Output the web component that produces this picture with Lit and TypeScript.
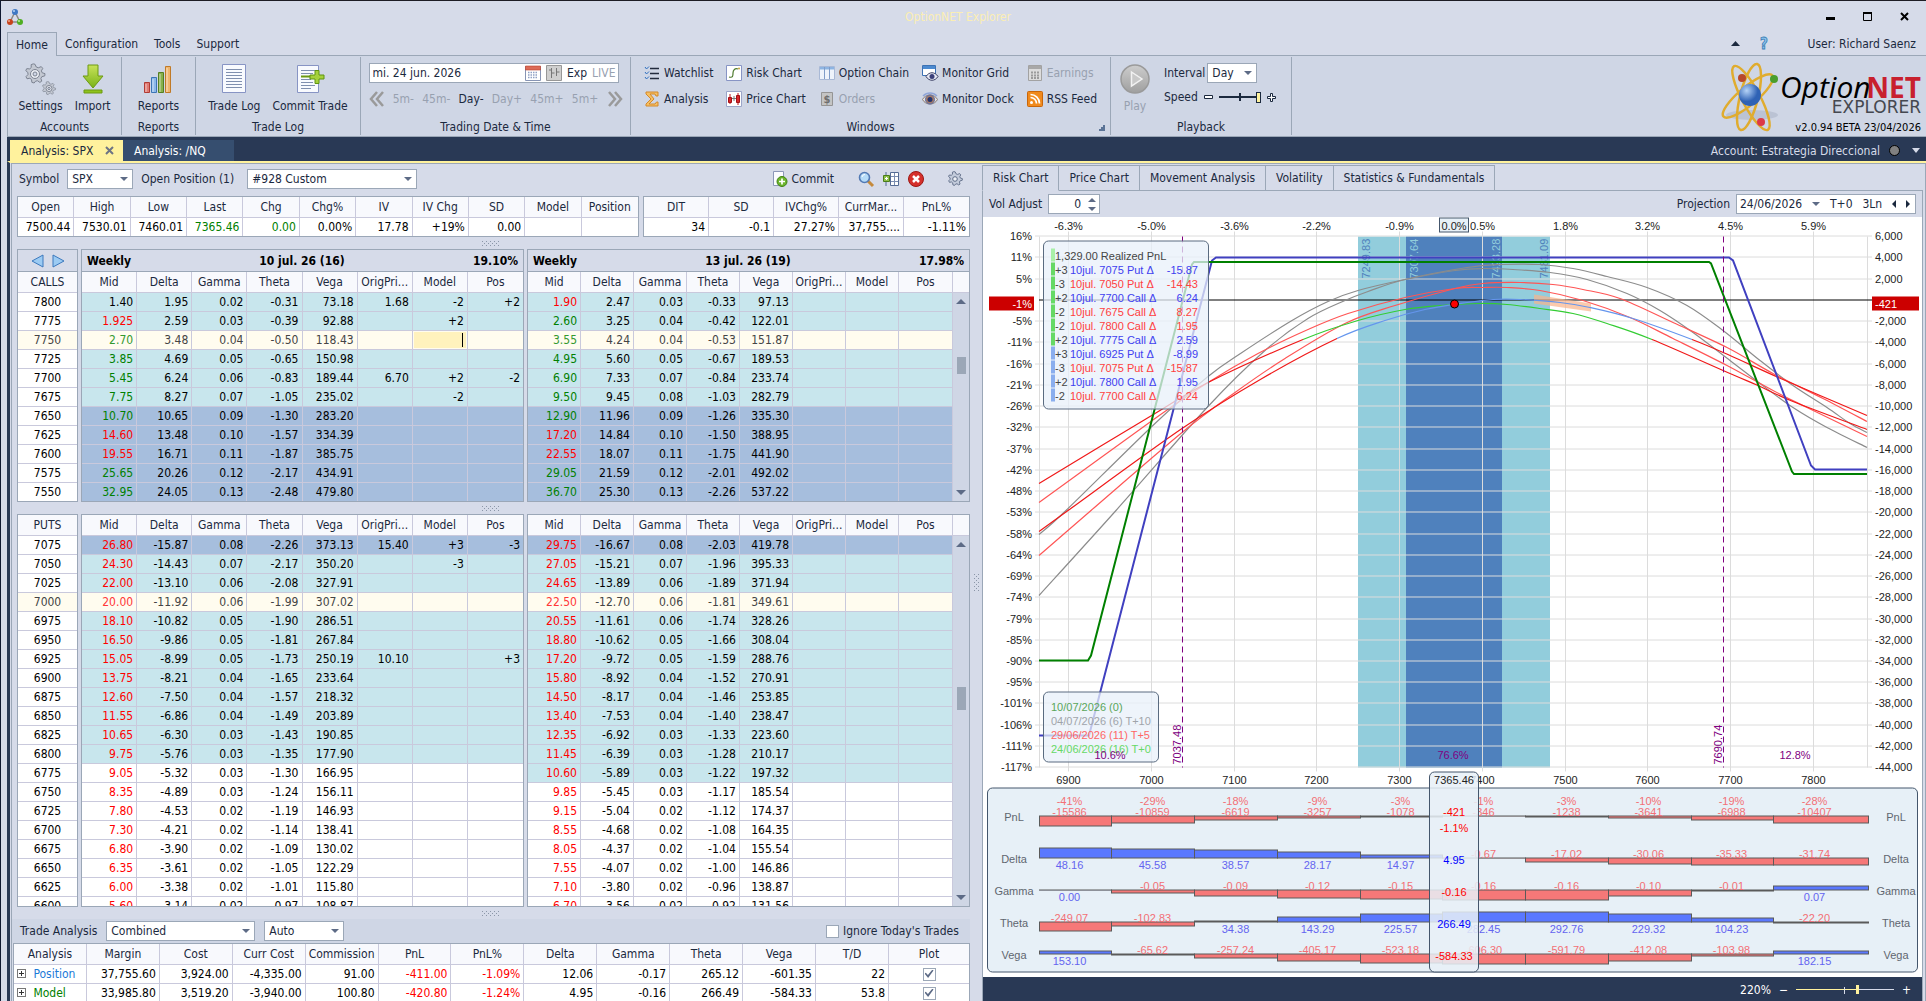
import {LitElement, html, svg, css, nothing} from 'lit';
import {customElement, property} from 'lit/decorators.js';
import {classMap} from 'lit/directives/class-map.js';

type Row = string[];

// Mid, Delta, Gamma, Theta, Vega, OrigPrice, Model, Pos. The leading letter of Mid is the tick colour.
const CALL_STRIKES = [7800, 7775, 7750, 7725, 7700, 7675, 7650, 7625, 7600, 7575, 7550];

const CALLS_A: Row[] = [
    ['k1.40', '1.95', '0.02', '-0.31', '73.18', '1.68', '-2', '+2'],
    ['r1.925', '2.59', '0.03', '-0.39', '92.88', '', '+2', ''],
    ['g2.70', '3.48', '0.04', '-0.50', '118.43', '', '', ''],
    ['g3.85', '4.69', '0.05', '-0.65', '150.98', '', '', ''],
    ['g5.45', '6.24', '0.06', '-0.83', '189.44', '6.70', '+2', '-2'],
    ['g7.75', '8.27', '0.07', '-1.05', '235.02', '', '-2', ''],
    ['g10.70', '10.65', '0.09', '-1.30', '283.20', '', '', ''],
    ['r14.60', '13.48', '0.10', '-1.57', '334.39', '', '', ''],
    ['r19.55', '16.71', '0.11', '-1.87', '385.75', '', '', ''],
    ['g25.65', '20.26', '0.12', '-2.17', '434.91', '', '', ''],
    ['g32.95', '24.05', '0.13', '-2.48', '479.80', '', '', ''],
];

const CALLS_B: Row[] = [
    ['r1.90', '2.47', '0.03', '-0.33', '97.13', '', '', ''],
    ['g2.60', '3.25', '0.04', '-0.42', '122.01', '', '', ''],
    ['g3.55', '4.24', '0.04', '-0.53', '151.87', '', '', ''],
    ['g4.95', '5.60', '0.05', '-0.67', '189.53', '', '', ''],
    ['g6.90', '7.33', '0.07', '-0.84', '233.74', '', '', ''],
    ['g9.50', '9.45', '0.08', '-1.03', '282.79', '', '', ''],
    ['g12.90', '11.96', '0.09', '-1.26', '335.30', '', '', ''],
    ['r17.20', '14.84', '0.10', '-1.50', '388.95', '', '', ''],
    ['r22.55', '18.07', '0.11', '-1.75', '441.90', '', '', ''],
    ['g29.05', '21.59', '0.12', '-2.01', '492.02', '', '', ''],
    ['g36.70', '25.30', '0.13', '-2.26', '537.22', '', '', ''],
];

const PUT_STRIKES = [7075, 7050, 7025, 7000, 6975, 6950, 6925, 6900, 6875, 6850,
    6825, 6800, 6775, 6750, 6725, 6700, 6675, 6650, 6625, 6600];

const PUTS_A: Row[] = [
    ['r26.80', '-15.87', '0.08', '-2.26', '373.13', '15.40', '+3', '-3'],
    ['r24.30', '-14.43', '0.07', '-2.17', '350.20', '', '-3', ''],
    ['r22.00', '-13.10', '0.06', '-2.08', '327.91', '', '', ''],
    ['r20.00', '-11.92', '0.06', '-1.99', '307.02', '', '', ''],
    ['r18.10', '-10.82', '0.05', '-1.90', '286.51', '', '', ''],
    ['r16.50', '-9.86', '0.05', '-1.81', '267.84', '', '', ''],
    ['r15.05', '-8.99', '0.05', '-1.73', '250.19', '10.10', '', '+3'],
    ['r13.75', '-8.21', '0.04', '-1.65', '233.64', '', '', ''],
    ['r12.60', '-7.50', '0.04', '-1.57', '218.32', '', '', ''],
    ['r11.55', '-6.86', '0.04', '-1.49', '203.89', '', '', ''],
    ['r10.65', '-6.30', '0.03', '-1.43', '190.85', '', '', ''],
    ['r9.75', '-5.76', '0.03', '-1.35', '177.90', '', '', ''],
    ['r9.05', '-5.32', '0.03', '-1.30', '166.95', '', '', ''],
    ['r8.35', '-4.89', '0.03', '-1.24', '156.11', '', '', ''],
    ['r7.80', '-4.53', '0.02', '-1.19', '146.93', '', '', ''],
    ['r7.30', '-4.21', '0.02', '-1.14', '138.41', '', '', ''],
    ['r6.80', '-3.90', '0.02', '-1.09', '130.02', '', '', ''],
    ['r6.35', '-3.61', '0.02', '-1.05', '122.29', '', '', ''],
    ['r6.00', '-3.38', '0.02', '-1.01', '115.80', '', '', ''],
    ['r5.60', '-3.14', '0.02', '-0.97', '108.87', '', '', ''],
];

const PUTS_B: Row[] = [
    ['r29.75', '-16.67', '0.08', '-2.03', '419.78', '', '', ''],
    ['r27.05', '-15.21', '0.07', '-1.96', '395.33', '', '', ''],
    ['r24.65', '-13.89', '0.06', '-1.89', '371.94', '', '', ''],
    ['r22.50', '-12.70', '0.06', '-1.81', '349.61', '', '', ''],
    ['r20.55', '-11.61', '0.06', '-1.74', '328.26', '', '', ''],
    ['r18.80', '-10.62', '0.05', '-1.66', '308.04', '', '', ''],
    ['r17.20', '-9.72', '0.05', '-1.59', '288.76', '', '', ''],
    ['r15.80', '-8.92', '0.04', '-1.52', '270.91', '', '', ''],
    ['r14.50', '-8.17', '0.04', '-1.46', '253.85', '', '', ''],
    ['r13.40', '-7.53', '0.04', '-1.40', '238.47', '', '', ''],
    ['r12.35', '-6.92', '0.03', '-1.33', '223.60', '', '', ''],
    ['r11.45', '-6.39', '0.03', '-1.28', '210.17', '', '', ''],
    ['r10.60', '-5.89', '0.03', '-1.22', '197.32', '', '', ''],
    ['r9.85', '-5.45', '0.03', '-1.17', '185.54', '', '', ''],
    ['r9.15', '-5.04', '0.02', '-1.12', '174.37', '', '', ''],
    ['r8.55', '-4.68', '0.02', '-1.08', '164.35', '', '', ''],
    ['r8.05', '-4.37', '0.02', '-1.04', '155.54', '', '', ''],
    ['r7.55', '-4.07', '0.02', '-1.00', '146.86', '', '', ''],
    ['r7.10', '-3.80', '0.02', '-0.96', '138.87', '', '', ''],
    ['r6.70', '-3.56', '0.02', '-0.92', '131.56', '', '', ''],
];

const CHAIN_HEADS = ['Mid', 'Delta', 'Gamma', 'Theta', 'Vega', 'OrigPri...', 'Model', 'Pos'];

const GREEKS = [
    {name: 'PnL', zero: 598.5, label: 603, now: '-421', sub: '-1.1%', max: 15586, digits: 0,
        values: [-15586, -10859, -6619, -3257, -1078, -346, -1238, -3641, -6988, -10407],
        pct: [-41, -29, -18, -9, -3, -1, -3, -10, -19, -28]},
    {name: 'Delta', zero: 640.5, label: 645, now: '4.95', sub: '', max: 48.16, digits: 2,
        values: [48.16, 45.58, 38.57, 28.17, 14.97, -0.67, -17.02, -30.06, -35.33, -31.74], pct: []},
    {name: 'Gamma', zero: 672.5, label: 677, now: '-0.16', sub: '', max: 0.16, digits: 2,
        values: [0, -0.05, -0.09, -0.12, -0.15, -0.16, -0.16, -0.10, -0.01, 0.07], pct: []},
    {name: 'Theta', zero: 704.5, label: 709, now: '266.49', sub: '', max: 292.76, digits: 2,
        values: [-249.07, -102.83, 34.38, 143.29, 225.57, 282.45, 292.76, 229.32, 104.23, -22.20], pct: []},
    {name: 'Vega', zero: 736.5, label: 741, now: '-584.33', sub: '', max: 606.3, digits: 2,
        values: [153.10, -65.62, -257.24, -405.17, -523.18, -606.30, -591.79, -412.08, -103.98, 182.15], pct: []},
];

const LEGS = [
    ['m', '+3', '7075 Put', '-15.87'],
    ['m', '-3', '7050 Put', '-14.43'],
    ['m', '+2', '7700 Call', '6.24'],
    ['m', '-2', '7675 Call', '8.27'],
    ['m', '-2', '7800 Call', '1.95'],
    ['m', '+2', '7775 Call', '2.59'],
    ['p', '+3', '6925 Put', '-8.99'],
    ['p', '-3', '7075 Put', '-15.87'],
    ['p', '+2', '7800 Call', '1.95'],
    ['p', '-2', '7700 Call', '6.24'],
];

const CURVES: {cls: string, pts: number[][]}[] = [
    {cls: 't10', pts: [[56, 317], [83, 293], [172, 206], [225, 159], [259, 135], [309, 103], [345, 84], [375, 73], [422, 62],
        [472, 53], [500, 51], [530, 52], [567, 55], [604, 62], [644, 76], [677, 93], [710, 115], [747, 143], [777, 166],
        [810, 190], [844, 210], [884, 230]]},
    {cls: 't10', pts: [[56, 378], [133, 293], [225, 189], [282, 133], [325, 101], [362, 83], [385, 74], [422, 62], [484, 50],
        [517, 47], [557, 47], [590, 51], [624, 59], [664, 70], [704, 88], [740, 113], [777, 143], [810, 168], [844, 190],
        [867, 206], [884, 215]]},
    {cls: 't5', pts: [[56, 285], [172, 201], [225, 165], [275, 136], [325, 112], [365, 96], [422, 80], [472, 71], [500, 70],
        [524, 70], [557, 73], [600, 83], [647, 100], [690, 121], [744, 148], [790, 173], [824, 190], [884, 219]]},
    {cls: 't5', pts: [[56, 338], [108, 293], [199, 215], [252, 175], [302, 141], [362, 106], [412, 88], [472, 71], [500, 66],
        [537, 65], [570, 67], [600, 72], [637, 81], [690, 105], [744, 130], [790, 156], [840, 181], [884, 204]]},
    {cls: 't0a', pts: [[56, 266], [172, 196], [225, 165], [320, 122], [375, 103], [422, 92], [457, 88], [497, 86], [524, 87],
        [557, 91], [590, 96], [624, 106], [669, 122], [747, 156], [775, 168], [810, 184], [884, 212]]},
    {cls: 't0b', pts: [[56, 314], [85, 293], [199, 211], [279, 161], [354, 121], [402, 103], [442, 92], [484, 85], [510, 82],
        [537, 82], [577, 85], [607, 90], [650, 101], [709, 122], [747, 138], [800, 162], [884, 198]]},
];

const priceX = (price: number) => 85.7 + (price - 6900) * 0.8275;
const pnlY = (pnl: number) => 82.4 - pnl * 0.01062;
const crisp = (n: number) => Math.floor(n) + 0.5;

// Catmull-Rom through the sampled points
const smooth = (pts: number[][]) => {
    let d = `M${pts[0][0]} ${pts[0][1]}`;
    for (let i = 0; i < pts.length - 1; i++) {
        const p0 = pts[i - 1] ?? pts[i];
        const p1 = pts[i];
        const p2 = pts[i + 1];
        const p3 = pts[i + 2] ?? p2;
        d += `C${p1[0] + (p2[0] - p0[0]) / 6} ${p1[1] + (p2[1] - p0[1]) / 6} `
            + `${p2[0] - (p3[0] - p1[0]) / 6} ${p2[1] - (p3[1] - p1[1]) / 6} ${p2[0]} ${p2[1]}`;
    }
    return d;
};

const GEAR = 'M8 1l1 2.2 1.6.6L13 2.900l1.200 1.400-1.100 2 .6 1.500L16 8.500l-.2 1.800-2.300.6-.8 1.400.7 2.200-1.500 1-1.900-1.300-1.500.3L7.300 16l-1.800-.5-.3-2.300-1.300-1-2.300.4-.8-1.700 1.600-1.700-.1-1.600L.600 6.100l.8-1.600 2.400.2 1.200-1.100-.1-2.300 1.700-.6z';

const ICONS: Record<string, unknown> = {
    app: svg`<path d="M8 3L3 13H13Z" fill="none" stroke="#8e8a84" stroke-width="1.500"/>
        <circle cx="8" cy="3" r="3" fill="#3f78c4"/><circle cx="7" cy="2" r="1" fill="#b5d2f5"/>
        <circle cx="3" cy="13" r="3" fill="#c8431c"/><circle cx="2" cy="12" r="1" fill="#f2a98c"/>
        <circle cx="13" cy="13" r="3" fill="#4fae22"/><circle cx="12" cy="12" r="1" fill="#c2ee9f"/>`,
    settings: svg`<g fill="#c3c8d2" stroke="#7d8492" stroke-width=".8"><path transform="translate(0 0) scale(1.250)" d="${GEAR}"/>
        <path transform="translate(17 18) scale(.85)" d="${GEAR}"/></g>
        <circle cx="10" cy="11" r="4.500" fill="#e9ecf2" stroke="#7d8492"/><circle cx="10" cy="11" r="2" fill="#cfd6e5" stroke="#7d8492"/>
        <circle cx="24" cy="25.500" r="3" fill="#e9ecf2" stroke="#7d8492"/><circle cx="24" cy="25.500" r="1.200" fill="#cfd6e5" stroke="#7d8492"/>`,
    import: svg`<path d="M11 2h10v11h5L16 25 6 13h5z" fill="url(#grn)" stroke="#6d9a12"/>
        <path d="M7 27h18v3H7z" fill="#8fc31c" stroke="#6d9a12"/>`,
    reports: svg`<path d="M2.500 19.500h5v10h-5z" fill="#e07a72" stroke="#b03b34"/><path d="M9.500 14.500h5v15h-5z" fill="#8bb8e8" stroke="#3c75b5"/>
        <path d="M16.500 9.500h5v20h-5z" fill="#86b04a" stroke="#557f22"/><path d="M23.500 3.500h5v26h-5z" fill="#efb56d" stroke="#c07a28"/>
        <path d="M4 21v8M11 16v13M18 11v18M25 5v24" stroke="#fff" stroke-opacity=".6"/>`,
    log: svg`<path d="M4.500 1.500h23v28h-23z" fill="#f8fafe" stroke="#8794c4"/>
        <path d="M8 6.500h16M8 9.500h16M8 12.500h16M8 15.500h16M8 18.500h16M8 21.500h16M8 24.500h16" stroke="#7f8fae"/>`,
    trade: svg`<path d="M3.500 2.500h21v27h-21z" fill="#f8fafe" stroke="#8794c4"/>
        <path d="M7 7.500h14M7 10.500h12M7 16.500h10M7 19.500h12M7 22.500h14M7 25.500h10" stroke="#7f8fae"/>
        <path d="M7 13.500h10" stroke="#6d9a12" stroke-width="2"/>
        <path d="M21 7.500h4v4.500h5v4h-5v4.500h-4v-4.500h-5v-4h5z" fill="#a5d13b" stroke="#5f9410"/>`,
    play: svg`<circle cx="16" cy="16" r="14" fill="url(#gry)" stroke="#9a9a9a" stroke-width="1.500"/>
        <path d="M12.500 9l10.500 7-10.500 7z" fill="#c9c9c9" stroke="#f2f2f2" stroke-width="1.500"/>`,
    watch: svg`<path d="M6 3.500h9M6 8.500h9M6 13.500h9" stroke="#222b3d" stroke-width="1.500"/>
        <path d="M1 2l1.500 2L5 1.500M1 7l1.500 2L5 6.500M1 12l1.500 2L5 11.500" fill="none" stroke="#2e6fc0"/>`,
    sigma: svg`<path d="M2 1h12v4h-2l-1-2H6l4 5-5 5h6l1.500-2H14v4H2v-2l5-5-5-5z" fill="#f6bf62" stroke="#d4892a"/>`,
    risk: svg`<path d="M.5.5h15v15H.500z" fill="#fff" stroke="#8794c4"/><path d="M3 12c4 1 4-1 4-4s2-5 5-4" fill="none" stroke="#4d7a2c" stroke-width="1.200"/><circle cx="13" cy="3.500" r="1" fill="#c7a13c"/>`,
    price: svg`<path d="M.5.5h15v15H.500z" fill="#fff" stroke="#9aa5c8"/><path d="M4 3v10M12 2v12" stroke="#c0181c"/>
        <path d="M2.500 6.500h3v5h-3zM10.500 4.500h3v7h-3z" fill="#d8262a" stroke="#a31014"/><path d="M6 7.500h4M8 5v5" stroke="#777"/>`,
    chain: svg`<path d="M.5 1.500h15v13H.500z" fill="#eef3fb" stroke="#a9b9d6"/><path d="M1 2h14v2.500H1z" fill="#8db4e2"/><path d="M5.500 2v12M10.500 2v12" stroke="#7f9cc8"/>`,
    orders: svg`<path d="M2.500 1.500h11v13h-11z" fill="#c4c4c4" stroke="#949494"/><text x="8" y="12" text-anchor="middle" font-size="11" font-weight="700" fill="#6e6e6e">$</text>`,
    grid: svg`<path d="M.5.5h13v10H.500z" fill="#fff" stroke="#3d72b4"/><path d="M1 1h12v3H1z" fill="#4c8ad0"/>
        <path d="M4 11.500c3-5 9-5 12 0-3 5-9 5-12 0z" fill="#e8ebf5" stroke="#3b3f63"/><circle cx="10" cy="11.500" r="2.500" fill="#3a3f78"/>`,
    dock: svg`<path d="M.5 8.500c3-6 12-6 15 0-3 6-12 6-15 0z" fill="#e5e2df" stroke="#8a7d77"/><circle cx="8" cy="8.500" r="4.500" fill="#a77b66" stroke="#5b70a8"/><circle cx="8" cy="8.500" r="2.500" fill="#26356e"/><path d="M1 5c4-4 10-4 14 0" fill="none" stroke="#8fa5d8" stroke-width="1.500"/>`,
    earn: svg`<path d="M1.500.500h13v15h-13z" fill="#dcdcdc" stroke="#a2a2a2"/><path d="M2 1h12v3H2z" fill="#a8a8a8"/><path d="M4 7.500h8M4 10.500h8M4 13h8" stroke="#9b9b9b" stroke-width="2" stroke-dasharray="2 1"/>`,
    rss: svg`<rect x=".5" y=".5" width="15" height="15" rx="1" fill="#f08a1d" stroke="#c9660a"/><circle cx="4.500" cy="11.500" r="1.500" fill="#fff"/>
        <path d="M3.500 6.500a6 6 0 0 1 6 6M3.500 3.500a9 9 0 0 1 9 9" fill="none" stroke="#fff" stroke-width="1.700"/>`,
    cal: svg`<path d="M.5 1.500h15v14H.500z" fill="#fff" stroke="#8794b4"/><path d="M.5 1h15v4H.500z" fill="#dc6a56" stroke="#b8402e" stroke-width=".6"/>
        <path d="M3 7.500h10M3 10h10M3 12.500h10" stroke="#8fa0c4" stroke-width="1.500" stroke-dasharray="1.500 1"/>`,
    bars: svg`<path d="M.5.5h15v15H.500z" fill="#cfcfcf" stroke="#979797"/><path d="M5.500 3v10M10.500 3v8M5.500 8h3M10.500 7h3M3 5h2" stroke="#777" fill="none"/>`,
    commit: svg`<path d="M1.500.500h10v14h-10z" fill="#fbfcff" stroke="#8c97b8"/><circle cx="10" cy="10.500" r="5" fill="#6cb52d" stroke="#3f8212"/><path d="M10 7.500v6M7 10.500h6" stroke="#fff" stroke-width="1.700"/>`,
    find: svg`<path d="M10 10l5 5" stroke="#c58a3c" stroke-width="3"/><circle cx="6.500" cy="6.500" r="5" fill="#b5dbf8" stroke="#5279b4" stroke-width="1.600"/><path d="M4 6a3 3 0 0 1 3-2.500" stroke="#fff" fill="none"/>`,
    cols: svg`<path d="M7.500 1.500h8v13h-8z" fill="#fff" stroke="#556b94"/><path d="M8 5.500h7M8 10.500h7M11.500 2v12" stroke="#7b8db0"/><path d="M3 1v14" stroke="#556b94"/><path d="M.5 4.500h6v6h-6z" fill="#8fc04a" stroke="#4a7d18"/><path d="M3.500 6v3M2 7.500h3" stroke="#fff"/>`,
    cancel: svg`<circle cx="8" cy="8" r="7.500" fill="#d5302b" stroke="#9c1713"/><path d="M5 5l6 6M11 5l-6 6" stroke="#fff" stroke-width="2.500"/>`,
    gear: svg`<path transform="translate(1 0) scale(.9)" d="${GEAR}" fill="#c3cbdb" stroke="#5d6b86"/><circle cx="8" cy="8" r="2.300" fill="#eef1f7" stroke="#5d6b86"/>`,
    help: svg`<text x="8" y="13" text-anchor="middle" font-size="15" font-weight="700" fill="#8ec4ee" stroke="#3c7fb5" stroke-width=".8">?</text>`,
};

const icon = (name: string, size = 16) => html`
    <svg class="icon" width=${size} height=${size} viewBox="0 0 ${size} ${size}" aria-hidden="true">
        <defs>
            <linearGradient id="grn" x2="0" y2="1"><stop stop-color="#c8e35a"/><stop offset="1" stop-color="#7ab317"/></linearGradient>
            <linearGradient id="gry" x2="0" y2="1"><stop stop-color="#cdcdcd"/><stop offset="1" stop-color="#9f9f9f"/></linearGradient>
        </defs>
        ${ICONS[name]}
    </svg>`;

const base = css`
    * { box-sizing: border-box; }

    button, input, select {
        font: inherit;
        color: inherit;
        margin: 0;
    }

    button {
        border: 0;
        padding: 0;
        background: none;
        white-space: nowrap;
    }

    .icon { display: block; flex: none; overflow: visible; }

    .select {
        position: relative;
        display: flex;
    }

    .select select {
        appearance: none;
        width: 100%;
        height: 20px;
        padding: 0 18px 0 4px;
        border: 1px solid #9ba7b7;
        border-radius: 0;
        background: #fff;
    }

    .select::after {
        content: "";
        position: absolute;
        right: 5px;
        top: 8px;
        border: 4px solid transparent;
        border-top-color: #5d6b86;
        border-bottom: 0;
        pointer-events: none;
    }
`;

@customElement('option-grid')
export class OptionGrid extends LitElement {

    @property({attribute: false}) rows: Row[] = [];
    @property({attribute: false}) strikes: number[] = [];
    @property() head = '';
    @property() term = '';
    @property() iv = '';
    @property({type: Number}) deep = 0;
    @property({type: Number}) mild = 0;
    @property({type: Number}) selected = -1;
    @property({type: Boolean}) calls = false;
    @property({type: Boolean}) editing = false;
    @property({attribute: false}) thumb: number[] = [];

    static styles = [base, css`
      :host {
        display: flex;
        flex-direction: column;
        min-width: 0;
        border: 1px solid #9ba7b7;
        background: #fff;
        overflow: hidden;
        color: #000;
      }

      .title {
        display: flex;
        align-items: center;
        justify-content: space-between;
        height: 22px;
        flex: none;
        padding: 0 5px;
        border-bottom: 1px solid #9ba7b7;
        background: #d6dbe9;
        font-weight: 700;
      }

      .title.nav {
        justify-content: center;
        gap: 8px;
      }

      .body {
        display: flex;
        flex: 1;
        min-height: 0;
      }

      table {
        flex: 1;
        min-width: 0;
        width: 100%;
        table-layout: fixed;
        border-spacing: 0;
        align-self: flex-start;
      }

      th, td {
        height: 19px;
        padding: 0 3px;
        line-height: 18px;
        border-right: 1px solid #c9c9dc;
        border-bottom: 1px solid #c9c9dc;
        text-align: right;
        white-space: nowrap;
        font-weight: 400;
      }

      th {
        height: 21px;
        padding: 0;
        background: #f8f9fd;
        color: #1b293e;
        text-align: center;
      }

      tr:last-child td {
        height: 18px;
        border-bottom: 0;
      }

      th:last-child, td:last-child { border-right: 0; }
      .strikes td { text-align: center; }
      .mild td { background: #c8e6ed; }
      .deep td { background: #a6bedd; }
      .sel td { background: #fffcef; color: #444; }
      td.r { color: #f00; }
      td.g { color: #008000; }
      .sel td.r { color: #ff3838; }
      .sel td.g { color: #33992e; }

      .edit {
        display: block;
        width: 100%;
        height: 16px;
        padding: 0;
        border: 0;
        text-align: right;
        background: linear-gradient(#000, #000) right 3px top 1px / 1px 14px no-repeat #fff2bd;
      }

      td.cell { padding: 0 1px; }

      .scroll {
        display: flex;
        flex-direction: column;
        align-items: center;
        width: 17px;
        flex: none;
        border-left: 1px solid #c9c9dc;
        background: #cfd6e5;
      }

      .scroll .top {
        width: 100%;
        height: 21px;
        flex: none;
        margin-bottom: 6px;
        border-bottom: 1px solid #c9c9dc;
        background: #f8f9fd;
      }

      .up, .down {
        border: 5px solid transparent;
        border-bottom-color: #5d6b86;
        border-top: 0;
      }

      .down {
        border-top: 5px solid #5d6b86;
        border-bottom: 0;
        margin-bottom: 6px;
      }

      .thumb {
        width: 9px;
        background: #9ba7b7;
      }
    `];

    rowClass(i: number) {
        const deep = this.calls ? i >= this.rows.length - this.deep : i < this.deep;
        return {
            sel: i === this.selected,
            deep: i !== this.selected && deep,
            mild: i !== this.selected && !deep && (this.calls || i < this.mild),
        };
    }

    renderStrikes() {
        return html`
            ${this.calls ? html`
                <div class="title nav">
                    <button aria-label="Previous expiry"><svg class="icon" width="13" height="14"><path d="M12 1v12L1 7z" fill="#9ccbf3" stroke="#3c79bd"/></svg></button>
                    <button aria-label="Next expiry"><svg class="icon" width="13" height="14"><path d="M1 1v12l11-6z" fill="#9ccbf3" stroke="#3c79bd"/></svg></button>
                </div>` : nothing}
            <table class="strikes">
                <tr><th>${this.head}</th></tr>
                ${this.strikes.map((s, i) => html`<tr class=${i === this.selected ? 'sel' : ''}><td>${s}</td></tr>`)}
            </table>`;
    }

    render() {
        if (this.strikes.length) return this.renderStrikes();
        return html`
            ${this.term ? html`
                <div class="title"><span>Weekly</span><span>${this.term}</span><span>${this.iv}</span></div>` : nothing}
            <div class="body">
                <table>
                    <tr>${CHAIN_HEADS.map(h => html`<th>${h}</th>`)}</tr>
                    ${this.rows.map((row, i) => html`
                        <tr class=${classMap(this.rowClass(i))}>
                            ${row.map((v, c) => c === 0
                                ? html`<td class=${v[0]}>${v.slice(1)}</td>`
                                : this.editing && i === this.selected && c === 6
                                    ? html`<td class="cell"><input class="edit" aria-label="Model quantity"></td>`
                                    : html`<td>${v}</td>`)}
                        </tr>`)}
                </table>
                ${this.thumb.length ? html`
                    <div class="scroll">
                        <div class="top"></div>
                        <div class="up"></div>
                        <div style="flex-grow:${this.thumb[0]}"></div>
                        <div class="thumb" style="flex-grow:${this.thumb[1]}"></div>
                        <div style="flex-grow:${this.thumb[2]}"></div>
                        <div class="down"></div>
                    </div>` : nothing}
            </div>`;
    }
}

@customElement('risk-chart')
export class RiskChart extends LitElement {

    static styles = css`
      :host {
        display: block;
        background: #fff;
        min-height: 0;
      }

      svg {
        display: block;
        width: 100%;
        height: 100%;
        font-family: "Liberation Sans", Arial, sans-serif;
        font-size: 11px;
      }

      text { fill: #222; }
      .mid { text-anchor: middle; }
      .end { text-anchor: end; }
      .gridline { stroke: #dcdcdc; }
      .outer { fill: #92cddc; }
      .inner { fill: #4f81bd; }
      text.on-outer { fill: #4f81bd; }
      text.on-inner { fill: #92cddc; }
      .zero { stroke: #000; }
      .curve { fill: none; stroke-width: 1.2; }
      .t10 { stroke: #8c8c8c; }
      .t5 { stroke: #f55; }
      .t0a { stroke: url(#t0a); }
      .t0b { stroke: url(#t0b); }
      .expiry { fill: none; stroke: #008000; stroke-width: 2; }
      .model { fill: none; stroke: #4040c0; stroke-width: 2; }
      .sd { stroke: #800080; stroke-dasharray: 6 4; }
      text.prob { fill: #800080; }
      .badge { fill: #c00; }
      text.badge-text { fill: #fff; }
      .box { fill: #e8f0fa; fill-opacity: .75; stroke: #5a6b80; }
      .panel { fill: #e7f0f7; stroke: #44566c; }
      .cursor { fill: #e7f0f7; fill-opacity: .85; stroke: #44566c; }
      text.name { fill: #5f666f; }
      text.soft { fill: #444; }
      .chip-m { fill: #66d966; }
      .chip-p { fill: #8aaeee; }
      .chip-r { fill: #a8f0a8; }
      text.buy { fill: #4040f0; }
      text.sell { fill: #ff4040; }
      .bar { stroke: #5a5a5a; }
      .neg { fill: #f67878; }
      .pos { fill: #5a78ff; }
      text.neg { fill: #f36f75; }
      text.pos { fill: #6464f0; }
      text.now-neg { fill: #f00; }
      text.now-pos { fill: #00f; }
      text.d0 { fill: #5aa65a; }
      text.d10 { fill: #a0a4aa; }
      text.d5 { fill: #f66; }
      text.dn { fill: #66d966; }
    `;

    strikes = [6900, 7000, 7100, 7200, 7300, 7400, 7500, 7600, 7700, 7800];
    moves = ['-6.3%', '-5.0%', '-3.6%', '-2.2%', '-0.9%', '0.5%', '1.8%', '3.2%', '4.5%', '5.9%'];
    levels = Array.from({length: 26}, (_, i) => 6000 - i * 2000);

    renderAxes() {
        return svg`
            <rect class="outer" x="375" y="19" width="192" height="531"/>
            <rect class="inner" x="423" y="19" width="96" height="531"/>
            ${this.strikes.map((s, i) => {
                const x = crisp(priceX(s));
                return svg`<path class="gridline" d="M${x} 14V554"/>
                    <text class="mid" x=${x} y="12">${this.moves[i]}</text>
                    <text class="mid" x=${x} y="566">${s}</text>`;
            })}
            <path class="gridline" d="M56.500 19V550M884.500 19V550"/>
            ${this.levels.map(v => {
                const y = crisp(pnlY(v));
                return v === 0 ? nothing : svg`<path class="gridline" d="M52 ${y}H889"/>
                    <text class="end" x="49" y=${y + 4}>${Math.round(v / 377.556)}%</text>
                    <text x="892" y=${y + 4}>${v.toLocaleString('en-US')}</text>`;
            })}
            <text class="on-outer" transform="translate(387 61) rotate(-90)">7249.83</text>
            <text class="on-inner" transform="translate(435 61) rotate(-90)">7307.64</text>
            <text class="on-inner" transform="translate(517 61) rotate(-90)">7423.28</text>
            <text class="on-outer" transform="translate(565 61) rotate(-90)">7481.09</text>`;
    }

    renderCurves() {
        return svg`
            <path class="zero" d="M56 82.500H889"/>
            <path d="M551 77l57 9v8l-57-8z" fill="#f9b48a" fill-opacity=".7"/>
            ${CURVES.map(c => svg`<path class="curve ${c.cls}" d=${smooth(c.pts)}/>`)}
            <path class="model" d="M56 518H106L229 43L233 40H746L750 43L828 248L832 252H884"/>
            <path class="expiry" d="M56 443H105L108 438L209 47L211 44.500H726L728 46L809 254L811 256.500H884"/>
            <path class="sd" d="M199.500 19V550M740.500 19V550"/>
            <text class="prob" transform="translate(198 547) rotate(-90)">7037.48</text>
            <text class="prob" transform="translate(739 547) rotate(-90)">7690.74</text>
            <circle cx="471.500" cy="86.500" r="4" fill="#f00" stroke="#000"/>
            <rect class="badge" x="6" y="79" width="45" height="14"/>
            <text class="badge-text end" x="49" y="90">-1%</text>
            <rect class="badge" x="889" y="79" width="47" height="14"/>
            <text class="badge-text" x="892" y="90">-421</text>
            <rect class="panel" x="456.500" y=".5" width="29" height="14"/>
            <text class="mid" x="471" y="12">0.0%</text>`;
    }

    renderLegends() {
        return svg`
            <rect class="box" x="60.500" y="23.500" width="165" height="168" rx="5"/>
            <rect class="chip-r" x="68" y="31" width="4" height="13"/>
            <text class="soft" x="72" y="42">1,329.00 Realized PnL</text>
            ${LEGS.map(([kind, qty, leg, delta], i) => {
                const y = 56 + i * 14;
                const side = qty[0] === '+' ? 'buy' : 'sell';
                return svg`<rect class="chip-${kind}" x="68" y=${y - 11} width="4" height="13"/>
                    <text class="soft" x="72" y=${y}>${qty}</text>
                    <text class=${side} x="87" y=${y}>10jul. ${leg} Δ</text>
                    <text class="${side} end" x="215" y=${y}>${delta}</text>`;
            })}
            <rect class="box" x="60.500" y="474.500" width="115" height="70" rx="5"/>
            <text class="d0" x="68" y="493">10/07/2026 (0)</text>
            <text class="d10" x="68" y="507">04/07/2026 (6) T+10</text>
            <text class="d5" x="68" y="521">29/06/2026 (11) T+5</text>
            <text class="dn" x="68" y="535">24/06/2026 (16) T+0</text>
            <text class="prob mid" x="127" y="541">10.6%</text>
            <text class="prob mid" x="470" y="541">76.6%</text>
            <text class="prob mid" x="812" y="541">12.8%</text>`;
    }

    renderGreeks() {
        const edges = [56.5, 128.5, 211.5, 294.5, 377.5, 459.5, 542.5, 625.5, 708.5, 790.5, 885.5];
        return svg`
            <rect class="panel" x="4.500" y="570.500" width="930" height="184" rx="5"/>
            ${GREEKS.map(g => svg`
                <text class="name mid" x="31" y=${g.label}>${g.name}</text>
                <text class="name mid" x="913" y=${g.label}>${g.name}</text>
                ${g.values.map((v, i) => {
                    const h = Math.round(Math.abs(v) / g.max * 10);
                    const up = v >= 0;
                    const cls = up ? 'pos' : 'neg';
                    const x = crisp(priceX(this.strikes[i]));
                    return svg`
                        <rect class="bar ${cls}" x=${edges[i]} y=${up ? g.zero - h : g.zero} width=${edges[i + 1] - edges[i]} height=${Math.max(h, .1)}/>
                        ${g.pct.length ? svg`<text class="mid neg" x=${x + 1} y="587">${g.pct[i]}%</text>` : nothing}
                        <text class="mid ${cls}" x=${x + 1} y=${up ? g.zero + 10.5 : g.zero - .5}>${v.toFixed(g.digits)}</text>`;
                })}`)}
            <rect class="cursor" x="446.500" y="554.500" width="49" height="200" rx="5"/>
            <text class="mid" x="471" y="566">7365.46</text>
            ${GREEKS.map(g => svg`
                <text class="mid ${g.now[0] === '-' ? 'now-neg' : 'now-pos'}" x="471" y=${g.sub ? g.zero : g.zero + 5.5}>${g.now}</text>
                ${g.sub ? svg`<text class="mid now-neg" x="471" y=${g.zero + 15.5}>${g.sub}</text>` : nothing}`)}`;
    }

    render() {
        return html`
            <svg viewBox="0 0 939 759" role="img" aria-label="Risk chart">
                <defs>
                    <linearGradient id="t0a" gradientUnits="userSpaceOnUse" x1="0" x2="939">
                        <stop offset="0.341" stop-color="#f01818"/><stop offset="0.341" stop-color="#3c3"/>
                        <stop offset="0.712" stop-color="#3c3"/><stop offset="0.712" stop-color="#f01818"/>
                    </linearGradient>
                    <linearGradient id="t0b" gradientUnits="userSpaceOnUse" x1="0" x2="939">
                        <stop offset="0.377" stop-color="#f01818"/><stop offset="0.377" stop-color="#6495ed"/>
                        <stop offset="0.755" stop-color="#6495ed"/><stop offset="0.755" stop-color="#f01818"/>
                    </linearGradient>
                </defs>
                ${this.renderAxes()}
                ${this.renderCurves()}
                ${this.renderLegends()}
                ${this.renderGreeks()}
            </svg>`;
    }
}

@customElement('app-root')
export class AppRoot extends LitElement {

    static styles = [base, css`
      :host {
        display: flex;
        flex-direction: column;
        height: 100vh;
        overflow: hidden;
        border-top: 1px solid #1d1c24;
        border-left: 1px solid #0f1830;
        background: #d6dbe9;
        color: #1b293e;
        font-family: "DejaVu Sans Condensed", Tahoma, Verdana, sans-serif;
        font-size: 12px;
        line-height: 16px;
      }

      .titlebar {
        display: grid;
        grid-template-columns: 1fr auto 1fr;
        align-items: center;
        height: 31px;
        flex: none;
        padding: 0 17px 0 6px;
        color: #fbeeb4;
      }

      .winbtns {
        display: flex;
        justify-content: flex-end;
        gap: 28px;
      }

      .menubar {
        display: flex;
        height: 23px;
        flex: none;
        margin-left: 6px;
        align-items: center;
      }

      .menubar button { padding: 0 8px; height: 23px; }

      .menubar .on {
        position: relative;
        height: 24px;
        align-self: flex-start;
        border: 1px solid #9ba7b7;
        border-bottom: 0;
        background: #cfd6e5;
      }

      .menubar .right {
        display: flex;
        align-items: center;
        gap: 16px;
        margin-left: auto;
        padding-right: 10px;
      }

      .menubar .right button { height: 16px; padding: 0; }
      .right .user { padding-left: 20px; }

      .ribbon {
        display: flex;
        height: 82px;
        flex: none;
        margin-left: 6px;
        padding: 1px 4px 1px 0;
        border: 1px solid #9ba7b7;
        border-right: 0;
        background: #cfd6e5;
      }

      .group {
        position: relative;
        display: flex;
        flex-direction: column;
        align-items: center;
        flex: none;
        border-right: 1px solid #9ba7b7;
      }

      .group .area {
        display: flex;
        justify-content: center;
        height: 62px;
        padding-top: 6px;
      }

      .w-acc { width: 114px; }
      .w-rep { width: 74px; }
      .w-log { width: 165px; }
      .w-date { width: 270px; }
      .w-win { width: 480px; }
      .w-play { width: 181px; }

      .big {
        display: flex;
        flex-direction: column;
        align-items: center;
        gap: 3px;
        height: 51px;
        padding: 0 6px;
      }

      .off { color: #98a1b0; }

      .date .area, .playctl {
        flex-direction: column;
        justify-content: flex-start;
        gap: 8px;
      }

      .datebox {
        display: flex;
        align-items: center;
        gap: 5px;
        width: 250px;
        height: 20px;
        padding-right: 2px;
        border: 1px solid #9ba7b7;
        background: #fff;
      }

      .datebox input {
        flex: 1;
        min-width: 0;
        padding: 0 3px;
        border: 0;
        background: none;
      }

      .steps {
        display: flex;
        align-items: center;
        justify-content: space-between;
        width: 254px;
      }

      .wins {
        display: grid;
        grid-template-columns: repeat(5, max-content);
        grid-auto-rows: 16px;
        gap: 10px 13px;
        padding-top: 2px;
      }

      .wins button {
        display: flex;
        align-items: center;
        gap: 4px;
      }

      .launcher {
        position: absolute;
        right: 5px;
        bottom: 4px;
        width: 7px;
        height: 7px;
        background: linear-gradient(135deg, transparent 50%, #5a7396 50%);
      }

      .w-play .area { align-self: flex-start; padding-left: 2px; }
      .playctl { display: flex; margin-left: 7px; }
      .playctl .line { display: flex; align-items: center; height: 20px; gap: 2px; }
      .playctl .line + .line { height: 12px; gap: 6px; }
      .playctl .select { width: 50px; }

      .brand {
        margin-left: auto;
        display: block;
      }

      .docs {
        display: flex;
        align-items: flex-end;
        height: 24px;
        flex: none;
        margin-left: 6px;
        padding: 0 6px 0 3px;
        background: #293955;
        color: #d6dbe9;
      }

      .docs button {
        display: flex;
        align-items: center;
        justify-content: space-between;
        width: 111px;
        height: 21px;
        padding: 0 9px 0 11px;
        background: #364e6f;
        color: #fff;
      }

      .docs .on {
        width: 113px;
        background: #fff29d;
        color: #1b293e;
      }

      .account {
        display: flex;
        align-items: center;
        gap: 9px;
        height: 21px;
        margin-left: auto;
      }

      .lamp {
        width: 11px;
        height: 11px;
        border: 1px solid #000;
        border-radius: 50%;
        background: #808080;
      }

      .tri {
        border: 4px solid transparent;
        border-top: 5px solid #d6dbe9;
        border-bottom: 0;
        margin-left: 3px;
      }

      .frame {
        display: flex;
        flex: 1;
        min-height: 0;
        margin-left: 6px;
        padding-left: 1px;
        border-left: 3px solid #293955;
        border-top: 2px solid #fff29d;
      }

      .work {
        flex: 1;
        min-width: 0;
        display: grid;
        grid-template-columns: minmax(0, 958fr) 12px minmax(0, 943fr);
        border: 1px solid #9ba7b7;
        border-bottom: 0;
      }

      .left {
        display: flex;
        flex-direction: column;
        min-height: 0;
        overflow: hidden;
      }

      .bar {
        display: flex;
        align-items: center;
        gap: 8px;
        height: 32px;
        flex: none;
        padding: 0 7px 2px 7px;
      }

      .bar label { flex: none; }
      .bar .sym { width: 66px; }
      .bar .poslabel { width: 98px; }
      .bar .pos { width: 170px; }
      .bar .tools { display: flex; gap: 9px; margin-left: auto; align-items: center; }
      .bar .commit { display: flex; align-items: center; gap: 4px; margin-right: 15px; }
      .bar .last { margin-left: 14px; }

      .quotes {
        display: grid;
        grid-template-columns: minmax(0, 622fr) minmax(0, 327fr);
        gap: 4px;
        flex: none;
        margin-left: 5px;
      }

      table {
        width: 100%;
        table-layout: fixed;
        border-spacing: 0;
        border: 1px solid #9ba7b7;
        background: #fff;
        color: #000;
      }

      th, td {
        height: 19px;
        padding: 0 3px;
        line-height: 18px;
        border-right: 1px solid #c9c9dc;
        border-bottom: 1px solid #c9c9dc;
        text-align: right;
        white-space: nowrap;
        overflow: hidden;
        font-weight: 400;
      }

      th {
        height: 21px;
        padding: 0;
        background: #f8f9fd;
        color: #1b293e;
        text-align: center;
      }

      th:last-child, td:last-child { border-right: 0; }
      .quotes td { height: 18px; border-bottom: 0; }
      .red { color: #f00; }
      .green { color: #008000; }
      td.blue { color: #1c7ad8; }

      .grip {
        display: flex;
        align-items: center;
        justify-content: center;
        height: 12px;
        flex: none;
      }

      .gutter {
        display: flex;
        align-items: center;
        justify-content: center;
      }

      .chain {
        display: grid;
        grid-template-columns: 61px minmax(0, 443fr) minmax(0, 443fr);
        gap: 3px;
        flex: none;
        margin-left: 5px;
      }

      .puts {
        flex: 1;
        min-height: 0;
        grid-template-rows: minmax(0, 1fr);
      }

      .analysis {
        display: flex;
        align-items: center;
        gap: 9px;
        height: 24px;
        flex: none;
        padding: 0 3px 0 8px;
        background: #cfd6e5;
      }

      .analysis .comb { width: 149px; }
      .analysis .auto { width: 80px; }
      .analysis .ignore { display: flex; align-items: center; gap: 4px; width: 141px; margin-left: auto; }

      .check {
        appearance: none;
        display: inline-grid;
        place-items: center;
        width: 13px;
        height: 13px;
        border: 1px solid #9ba7b7;
        background: #fff;
      }

      .check:checked::before {
        content: "";
        width: 9px;
        height: 9px;
        background: #5d6b86;
        clip-path: polygon(0 45%, 15% 35%, 38% 62%, 88% 0, 100% 10%, 40% 95%);
      }

      .trades { margin-left: 1px; height: 59px; flex: none; }
      .trades .plot { width: 80px; text-align: center; }
      .trades td.plot { line-height: 13px; vertical-align: middle; }
      .trades .plot .check { vertical-align: top; }
      .trades td.kind { text-align: left; }

      .plus {
        display: inline-block;
        width: 9px;
        height: 9px;
        margin-right: 4px;
        border: 1px solid #777;
        background: linear-gradient(#333, #333) center / 5px 1px no-repeat, linear-gradient(#333, #333) center / 1px 5px no-repeat;
      }

      .right-pane {
        display: flex;
        flex-direction: column;
        min-height: 0;
        padding-top: 1px;
        padding-right: 2px;
      }

      .tabs {
        display: flex;
        height: 26px;
        flex: none;
        box-shadow: inset 0 -1px #9ba7b7;
      }

      .tabs button {
        padding: 0 10px;
        border: 1px solid #9ba7b7;
        border-left-width: 0;
      }

      .tabs .on {
        border-left-width: 1px;
        border-bottom-color: #d6dbe9;
      }

      .pane {
        flex: 1;
        min-height: 0;
        display: flex;
        flex-direction: column;
        border-left: 1px solid #9ba7b7;
        border-right: 1px solid #9ba7b7;
      }

      .opts {
        display: flex;
        align-items: center;
        gap: 6px;
        height: 26px;
        flex: none;
        padding: 0 6px;
      }

      .spin, .proj {
        display: flex;
        align-items: center;
        height: 20px;
        border: 1px solid #9ba7b7;
        background: #fff;
      }

      .spin { width: 52px; padding-right: 3px; }
      .spin input { width: 32px; padding: 0; border: 0; background: none; text-align: right; }
      .spin .arrows { margin-left: auto; }
      .opts .plabel { margin-left: auto; }
      .proj { width: 180px; padding: 0 5px 0 3px; justify-content: space-between; }

      risk-chart { flex: 1; }

      .status {
        display: flex;
        align-items: center;
        justify-content: flex-end;
        gap: 8px;
        height: 25px;
        flex: none;
        padding-right: 11px;
        background: #293955;
        color: #fff;
      }

      .zoom {
        appearance: none;
        width: 98px;
        height: 12px;
        background: linear-gradient(#d6dbe9, #d6dbe9) 48px 3px / 1px 7px no-repeat,
            linear-gradient(90deg, #fff29d 60px, #d6dbe9 60px) center / 100% 1px no-repeat;
      }

      .zoom::-webkit-slider-thumb {
        appearance: none;
        width: 3px;
        height: 9px;
        background: #fff29d;
      }

      .speed {
        appearance: none;
        width: 42px;
        height: 12px;
        background: linear-gradient(#1b293e, #1b293e) 20px 2px / 2px 8px no-repeat,
            linear-gradient(#1b293e, #1b293e) center / 100% 2px no-repeat;
      }

      .speed::-webkit-slider-thumb {
        appearance: none;
        width: 5px;
        height: 11px;
        border: 1px solid #1b293e;
        background: #fff29d;
      }
    `];

    big(name: string, label: string, off = false) {
        return html`<button class=${classMap({big: true, off})} ?disabled=${off}>${icon(name, 32)}${label}</button>`;
    }

    renderGrip() {
        return html`
            <div class="grip">
                <svg class="icon" width="18" height="5"><path d="M0 .5h18M0 4.500h18M2 2.500h15" stroke="#8b96a8" stroke-dasharray="1 3"/></svg>
            </div>`;
    }

    renderRibbon() {
        const wins = [['watch', 'Watchlist'], ['risk', 'Risk Chart'], ['chain', 'Option Chain'], ['grid', 'Monitor Grid'],
            ['earn', 'Earnings'], ['sigma', 'Analysis'], ['price', 'Price Chart'], ['orders', 'Orders'],
            ['dock', 'Monitor Dock'], ['rss', 'RSS Feed']];
        return html`
            <div class="ribbon">
                <div class="group w-acc"><div class="area">${this.big('settings', 'Settings')}${this.big('import', 'Import')}</div>Accounts</div>
                <div class="group w-rep"><div class="area">${this.big('reports', 'Reports')}</div>Reports</div>
                <div class="group w-log"><div class="area">${this.big('log', 'Trade Log')}${this.big('trade', 'Commit Trade')}</div>Trade Log</div>
                <div class="group w-date date">
                    <div class="area">
                        <div class="datebox">
                            <input value="mi. 24 jun. 2026" aria-label="Trading date">
                            <button aria-label="Calendar">${icon('cal')}</button>
                            <button aria-label="Bars">${icon('bars')}</button>
                            <button>Exp</button>
                            <button class="off">LIVE</button>
                        </div>
                        <div class="steps">
                            <button aria-label="Back"><svg class="icon" width="16" height="16"><path d="M8 1L2 8l6 7M14 1L8 8l6 7" fill="none" stroke="#9a9a9a" stroke-width="2.500"/></svg></button>
                            <button class="off">5m-</button><button class="off">45m-</button><button>Day-</button>
                            <button class="off">Day+</button><button class="off">45m+</button><button class="off">5m+</button>
                            <button aria-label="Forward"><svg class="icon" width="16" height="16"><path d="M8 1l6 7-6 7M2 1l6 7-6 7" fill="none" stroke="#9a9a9a" stroke-width="2.500"/></svg></button>
                        </div>
                    </div>
                    Trading Date &amp; Time
                </div>
                <div class="group w-win">
                    <div class="area">
                        <div class="wins">
                            ${wins.map(([name, label]) => html`
                                <button class=${name === 'earn' || name === 'orders' ? 'off' : ''}>${icon(name)}${label}</button>`)}
                        </div>
                    </div>
                    Windows
                    <span class="launcher"></span>
                </div>
                <div class="group w-play">
                    <div class="area">
                        ${this.big('play', 'Play', true)}
                        <div class="playctl">
                            <div class="line">
                                <label for="interval">Interval</label>
                                <span class="select"><select id="interval"><option>Day</option></select></span>
                            </div>
                            <div class="line">
                                <label for="speed">Speed</label>
                                <svg class="icon" width="9" height="5"><path d="M.5.5h8v3h-8z" fill="#fff" stroke="#1b293e"/></svg>
                                <input class="speed" id="speed" type="range" value="100">
                                <svg class="icon" width="9" height="9"><path d="M3.500.500h2v3h3v2h-3v3h-2v-3h-3v-2h3z" fill="#fff" stroke="#1b293e"/></svg>
                            </div>
                        </div>
                    </div>
                    Playback
                </div>
                <svg class="brand" width="202" height="78" viewBox="0 0 202 78" role="img" aria-label="OptionNET Explorer">
                    <defs><radialGradient id="core" cx=".35" cy=".3"><stop stop-color="#b5d3f7"/><stop offset="1" stop-color="#2f62b5"/></radialGradient></defs>
                    <ellipse cx="32" cy="58" rx="26" ry="5" fill="#8d97ab" fill-opacity=".3"/>
                    <g fill="none" stroke="#e0ac2e" stroke-width="2.500">
                        <ellipse cx="31" cy="41" rx="9" ry="36" transform="rotate(-28 31 41)"/>
                        <ellipse cx="29" cy="40" rx="9" ry="34" transform="rotate(14 29 40)"/>
                        <ellipse cx="28" cy="39" rx="9" ry="32" transform="rotate(50 28 39)"/>
                    </g>
                    <circle cx="30" cy="38" r="11" fill="url(#core)"/>
                    <circle cx="22" cy="21" r="4" fill="#b8482b"/><circle cx="54" cy="22" r="4" fill="#4b9e2c"/><circle cx="41" cy="65" r="4" fill="#dc3a48"/>
                    <text x="60" y="41" font-family="Open Sans, sans-serif" font-size="30" font-style="italic" fill="#000">Option</text>
                    <text x="201" y="41" text-anchor="end" font-family="Open Sans, sans-serif" font-size="28" font-weight="700" fill="#c8202e">NET</text>
                    <text x="201" y="56" text-anchor="end" font-family="DejaVu Sans, sans-serif" font-size="17" fill="#454850">EXPLORER</text>
                    <text x="201" y="74" text-anchor="end" font-family="DejaVu Sans Condensed, sans-serif" font-size="11" fill="#000">v2.0.94 BETA 23/04/2026</text>
                </svg>
            </div>`;
    }

    renderLeft() {
        const q1: [string, string, string?][] = [['Open', '7500.44'], ['High', '7530.01'], ['Low', '7460.01'], ['Last', '7365.46', 'green'],
            ['Chg', '0.00', 'green'], ['Chg%', '0.00%'], ['IV', '17.78'], ['IV Chg', '+19%'], ['SD', '0.00'], ['Model', ''], ['Position', '']];
        const q2 = [['DIT', '34'], ['SD', '-0.1'], ['IVChg%', '27.27%'], ['CurrMar...', '37,755....'], ['PnL%', '-1.11%']];
        const cols = ['Analysis', 'Margin', 'Cost', 'Curr Cost', 'Commission', 'PnL', 'PnL%', 'Delta', 'Gamma', 'Theta', 'Vega', 'T/D'];
        const trades = [
            ['Position', '37,755.60', '3,924.00', '-4,335.00', '91.00', '-411.00', '-1.09%', '12.06', '-0.17', '265.12', '-601.35', '22'],
            ['Model', '33,985.80', '3,519.20', '-3,940.00', '100.80', '-420.80', '-1.24%', '4.95', '-0.16', '266.49', '-584.33', '53.8'],
        ];
        return html`
            <section class="left">
                <div class="bar">
                    <label for="symbol">Symbol</label>
                    <span class="select sym"><select id="symbol"><option>SPX</option></select></span>
                    <label class="poslabel" for="position">Open Position (1)</label>
                    <span class="select pos"><select id="position"><option>#928 Custom</option></select></span>
                    <div class="tools">
                        <button class="commit">${icon('commit')}Commit</button>
                        <button aria-label="Find">${icon('find')}</button>
                        <button aria-label="Columns">${icon('cols')}</button>
                        <button aria-label="Close position">${icon('cancel')}</button>
                        <button class="last" aria-label="Options">${icon('gear')}</button>
                    </div>
                </div>
                <div class="quotes">
                    <table>
                        <tr>${q1.map(([h]) => html`<th>${h}</th>`)}</tr>
                        <tr>${q1.map(([, v, c]) => html`<td class=${c ?? ''}>${v}</td>`)}</tr>
                    </table>
                    <table>
                        <tr>${q2.map(([h]) => html`<th>${h}</th>`)}</tr>
                        <tr>${q2.map(([, v]) => html`<td>${v}</td>`)}</tr>
                    </table>
                </div>
                ${this.renderGrip()}
                <div class="chain">
                    <option-grid head="CALLS" calls .strikes=${CALL_STRIKES} selected="2"></option-grid>
                    <option-grid term="10 jul. 26 (16)" iv="19.10%" calls editing .rows=${CALLS_A} deep="5" selected="2"></option-grid>
                    <option-grid term="13 jul. 26 (19)" iv="17.98%" calls .rows=${CALLS_B} deep="5" selected="2" .thumb=${[52, 17, 115]}></option-grid>
                </div>
                ${this.renderGrip()}
                <div class="chain puts">
                    <option-grid head="PUTS" .strikes=${PUT_STRIKES} selected="3"></option-grid>
                    <option-grid .rows=${PUTS_A} deep="1" mild="12" selected="3"></option-grid>
                    <option-grid .rows=${PUTS_B} deep="1" mild="13" selected="3" .thumb=${[138, 23, 183]}></option-grid>
                </div>
                ${this.renderGrip()}
                <div class="analysis">
                    <label for="mode">Trade Analysis</label>
                    <span class="select comb"><select id="mode"><option>Combined</option></select></span>
                    <span class="select auto"><select aria-label="Refresh"><option>Auto</option></select></span>
                    <label class="ignore"><input class="check" type="checkbox">Ignore Today's Trades</label>
                </div>
                <div class="trades">
                    <table>
                        <tr>${cols.map(c => html`<th>${c}</th>`)}<th class="plot">Plot</th></tr>
                        ${trades.map((t, r) => html`
                            <tr>
                                <td class="kind ${r ? 'green' : 'blue'}"><span class="plus"></span> ${t[0]}</td>
                                ${t.slice(1).map((v, i) => html`<td class=${i === 4 || i === 5 ? 'red' : ''}>${v}</td>`)}
                                <td class="plot"><input class="check" type="checkbox" checked aria-label="Plot ${t[0]}"></td>
                            </tr>`)}
                    </table>
                </div>
            </section>`;
    }

    renderRight() {
        return html`
            <section class="right-pane">
                <div class="tabs">
                    <button class="on">Risk Chart</button><button>Price Chart</button><button>Movement Analysis</button>
                    <button>Volatility</button><button>Statistics &amp; Fundamentals</button>
                </div>
                <div class="pane">
                    <div class="opts">
                        <label for="vol">Vol Adjust</label>
                        <span class="spin"><input id="vol" value="0">
                            <svg class="icon arrows" width="8" height="15"><path d="M0 5l4-4 4 4zM0 10l4 4 4-4z" fill="#5d6b86"/></svg>
                        </span>
                        <label class="plabel" for="proj">Projection</label>
                        <span class="proj">
                            <button id="proj">24/06/2026</button>
                            <svg class="icon" width="8" height="4"><path d="M0 0h8L4 4z" fill="#5d6b86"/></svg>
                            <button>T+0</button><button>3Ln</button>
                            <svg class="icon" width="4" height="8"><path d="M4 0v8L0 4z" fill="#1b293e"/></svg>
                            <svg class="icon" width="4" height="8"><path d="M0 0v8l4-4z" fill="#1b293e"/></svg>
                        </span>
                    </div>
                    <risk-chart></risk-chart>
                    <div class="status">
                        <label for="zoom">220%</label>
                        <span>−</span><input class="zoom" id="zoom" type="range" value="63"><span>+</span>
                    </div>
                </div>
            </section>`;
    }

    render() {
        return html`
            <header class="titlebar">
                ${icon('app')}
                <span>OptionNET Explorer</span>
                <div class="winbtns">
                    <button aria-label="Minimize"><svg class="icon" width="9" height="9"><path d="M0 5h9v3H0z"/></svg></button>
                    <button aria-label="Maximize"><svg class="icon" width="9" height="9"><path d="M.5 1h8v7.500h-8z" fill="none" stroke="#000"/><path d="M0 0h9v2H0z"/></svg></button>
                    <button aria-label="Close"><svg class="icon" width="9" height="9"><path d="M1 1l7 7M8 1L1 8" stroke="#000" stroke-width="2"/></svg></button>
                </div>
            </header>
            <nav class="menubar">
                <button class="on">Home</button><button>Configuration</button><button>Tools</button><button>Support</button>
                <div class="right">
                    <svg class="icon" width="9" height="5"><path d="M0 5l4.500-5L9 5z" fill="#1b293e"/></svg>
                    <button aria-label="Help">${icon('help')}</button>
                    <span class="user">User: Richard Saenz</span>
                </div>
            </nav>
            ${this.renderRibbon()}
            <div class="docs">
                <button class="on">Analysis: SPX <svg class="icon" width="9" height="9"><path d="M1 1l7 7M8 1L1 8" stroke="#6d7484" stroke-width="2"/></svg></button>
                <button>Analysis: /NQ</button>
                <div class="account">Account: Estrategia Direccional <span class="lamp"></span><span class="tri"></span></div>
            </div>
            <div class="frame">
                <main class="work">
                    ${this.renderLeft()}
                    <div class="gutter">
                        <svg class="icon" width="5" height="18"><path d="M.5 0v18M4.500 0v18M2.500 2v15" stroke="#8b96a8" stroke-dasharray="1 3"/></svg>
                    </div>
                    ${this.renderRight()}
                </main>
            </div>`;
    }
}
